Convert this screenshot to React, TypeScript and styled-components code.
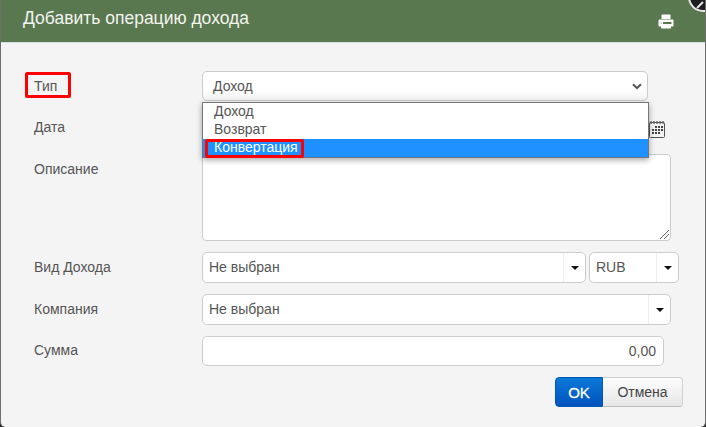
import React from "react";
import styled, { createGlobalStyle } from "styled-components";

const Global = createGlobalStyle`
  html, body { margin: 0; padding: 0; background: #2b2b2b; }
  body { width: 706px; height: 427px; overflow: hidden; font-family: "Liberation Sans", Arial, sans-serif; }
  * { box-sizing: border-box; }
`;

const Modal = styled.div`
  position: relative;
  width: 706px;
  height: 427px;
  background: #f4f4f4;
  border-left: 1px solid #6e6e6e;
  border-right: 1px solid #6e6e6e;
  border-bottom-left-radius: 5px;
  border-bottom-right-radius: 5px;
  overflow: hidden;
`;

const Header = styled.header`
  height: 43px;
  background: #5a784f;
  border-bottom: 1px solid #d5e0e6;
  display: flex;
  align-items: center;
  justify-content: space-between;
  padding: 0 31px 6px 22px;
`;

const Title = styled.h1`
  margin: 0;
  font-size: 17.5px;
  font-weight: 400;
  color: #f2f5f0;
  padding-top: 1px;
`;

const PrintIcon = styled.svg`
  width: 16px;
  height: 16px;
  margin-top: 8px;
  display: block;
`;

const Close = styled.svg`
  position: absolute;
  top: -18px;
  right: -13px;
  width: 30px;
  height: 30px;
`;

const Form = styled.form`
  position: relative;
  padding: 28px 0 0 33px;
  display: flex;
  flex-direction: column;
`;

const Row = styled.div<{ $h: number; $mb: number }>`
  display: grid;
  grid-template-columns: 168px auto;
  justify-content: start;
  height: ${(p) => p.$h}px;
  margin-bottom: ${(p) => p.$mb}px;
`;

const Label = styled.label<{ $top?: number }>`
  position: relative;
  font-size: 14px;
  line-height: 16px;
  color: #555;
  padding-top: ${(p) => p.$top ?? 7}px;
`;

const Mark = styled.span`
  position: absolute;
  pointer-events: none;
  border: 3px solid #f00;
  border-radius: 2px;
`;

const LabelMark = styled(Mark)`
  left: -9px;
  top: 1px;
  width: 46px;
  height: 26px;
`;

const SelectBox = styled.div`
  width: 446px;
  height: 30px;
  background: linear-gradient(#fff 65%, #f1f1f1);
  border: 1px solid #ccc;
  border-radius: 5px;
  display: flex;
  align-items: center;
  justify-content: space-between;
  padding: 0 5px 0 10px;
  font-size: 14px;
  color: #555;
`;

const ListBox = styled.div`
  position: absolute;
  left: 201px;
  top: 59px;
  width: 447px;
  height: 56px;
  background: #fff;
  border: 1px solid #767676;
  box-shadow: 0 2px 6px rgba(0, 0, 0, 0.35);
  z-index: 2;
`;

const Option = styled.div<{ $active?: boolean }>`
  position: relative;
  height: 18px;
  line-height: 16px;
  padding-left: 11px;
  font-size: 14px;
  color: ${(p) => (p.$active ? "#fff" : "#555")};
  background: ${(p) => (p.$active ? "#1e90ff" : "transparent")};
`;

const OptionMark = styled(Mark)`
  left: 2px;
  top: 0;
  width: 99px;
  height: 19px;
`;

const CalendarRow = styled.div`
  display: flex;
  width: 463px;
  justify-content: flex-end;
  align-items: flex-start;
  padding-top: 8px;
`;

const TextArea = styled.div`
  position: relative;
  width: 469px;
  height: 87px;
  background: #fff;
  border: 1px solid #ccc;
  border-radius: 4px;
`;

const Grip = styled.svg`
  position: absolute;
  right: 1px;
  bottom: 1px;
  width: 10px;
  height: 10px;
`;

const Combos = styled.div`
  display: flex;
  gap: 3px;
`;

const Combo = styled.div<{ $w: number }>`
  width: ${(p) => p.$w}px;
  height: 31px;
  display: flex;
  background: #fff;
  border: 1px solid #ccc;
  border-radius: 5px;
  font-size: 14px;
  color: #555;
`;

const ComboValue = styled.span`
  flex: 1;
  line-height: 29px;
  padding-left: 6px;
`;

const ComboCaret = styled.span`
  width: 22px;
  border-left: 1px solid #eee;
  display: flex;
  align-items: center;
  justify-content: center;
  &::after {
    content: "";
    border-top: 4px solid #111;
    border-left: 4px solid transparent;
    border-right: 4px solid transparent;
  }
`;

const Amount = styled.div`
  width: 462px;
  height: 30px;
  background: #fff;
  border: 1px solid #ccc;
  border-radius: 5px;
  line-height: 29px;
  text-align: right;
  padding-right: 7px;
  font-size: 14px;
  color: #555;
`;

const Actions = styled.div`
  display: flex;
  width: 649px;
  justify-content: flex-end;
  margin-top: 11px;
`;

const Ok = styled.button`
  width: 48px;
  height: 30px;
  border: 1px solid #0057b8;
  border-radius: 4px 0 0 4px;
  background: linear-gradient(#0a78d8, #0052bd);
  color: #fff;
  font: 400 15px "Liberation Sans", Arial, sans-serif;
  -webkit-text-stroke: 0.3px #fff;
  padding: 0;
`;

const Cancel = styled.button`
  width: 80px;
  height: 30px;
  border: 1px solid #d0d0d0;
  border-left: none;
  border-bottom-color: #bdbdbd;
  border-radius: 0 4px 4px 0;
  background: linear-gradient(#fdfdfd, #e6e6e6);
  color: #444;
  font: 400 14px "Liberation Sans", Arial, sans-serif;
  padding: 0;
`;

export default function App() {
  return (
    <>
      <Global />
      <Modal>
        <Header>
          <Title>Добавить операцию дохода</Title>
          <PrintIcon viewBox="0 0 16 16">
            <path fill="#fff" d="M3.500 1.500C3.500 .9 4 .5 4.500 .5h7c.6 0 1 .4 1 1V5h-9z" />
            <path
              fill="#fff"
              fillRule="evenodd"
              d="M1.500 5.500h13c.6 0 1 .4 1 1v5c0 .6-.4 1-1 1H13v1c0 .6-.4 1-1 1H4c-.6 0-1-.4-1-1v-1H1.500c-.6 0-1-.4-1-1v-5c0-.6.4-1 1-1zM5 8v2h8.500V8z"
            />
            <path fill="#5a784f" d="M2.500 8.500h1v1h-1z" />
          </PrintIcon>
        </Header>
        <Close viewBox="0 0 30 30">
          <circle cx="15" cy="15" r="14" fill="#1d1d1d" stroke="#e8e8e8" strokeWidth="2" />
          <path d="M9 26 15 20" stroke="#e8e8e8" strokeWidth="2" />
        </Close>
        <Form>
          <ListBox>
            <Option>Доход</Option>
            <Option>Возврат</Option>
            <Option $active>
              Конвертация
              <OptionMark />
            </Option>
          </ListBox>
          <Row $h={30} $mb={11}>
            <Label>
              Тип
              <LabelMark />
            </Label>
            <SelectBox>
              Доход
              <svg width="10" height="7" viewBox="0 0 10 7">
                <path d="M1 1.200 5 5.200l4-4" fill="none" stroke="#555" strokeWidth="2" />
              </svg>
            </SelectBox>
          </Row>
          <Row $h={30} $mb={12}>
            <Label>Дата</Label>
            <CalendarRow>
              <svg width="16" height="18" viewBox="0 0 16 18">
                <rect x="0.500" y="2.500" width="15" height="15" rx="1" fill="#f4f4f4" stroke="#555" />
                <path d="M2 1v3M5 1v3M8 1v3M11 1v3M14 1v3" stroke="#555" strokeWidth="1.200" />
                <path
                  d="M6 6h2v2H6zM9 6h2v2H9zM12 6h2v2h-2zM3 9h2v2H3zM6 9h2v2H6zM9 9h2v2H9zM12 9h2v2h-2zM3 12h2v2H3zM6 12h2v2H6zM9 12h2v2H9z"
                  fill="#444"
                />
              </svg>
            </CalendarRow>
          </Row>
          <Row $h={87} $mb={11}>
            <Label>Описание</Label>
            <TextArea>
              <Grip viewBox="0 0 10 10">
                <path d="M1 10 10 1M5 10l5-5" stroke="#666" strokeWidth="1" />
              </Grip>
            </TextArea>
          </Row>
          <Row $h={31} $mb={11}>
            <Label>Вид Дохода</Label>
            <Combos>
              <Combo $w={384}>
                <ComboValue>Не выбран</ComboValue>
                <ComboCaret />
              </Combo>
              <Combo $w={90}>
                <ComboValue>RUB</ComboValue>
                <ComboCaret />
              </Combo>
            </Combos>
          </Row>
          <Row $h={31} $mb={11}>
            <Label>Компания</Label>
            <Combo $w={469}>
              <ComboValue>Не выбран</ComboValue>
              <ComboCaret />
            </Combo>
          </Row>
          <Row $h={30} $mb={0}>
            <Label $top={6}>Сумма</Label>
            <Amount>0,00</Amount>
          </Row>
          <Actions>
            <Ok type="button">OK</Ok>
            <Cancel type="button">Отмена</Cancel>
          </Actions>
        </Form>
      </Modal>
    </>
  );
}
